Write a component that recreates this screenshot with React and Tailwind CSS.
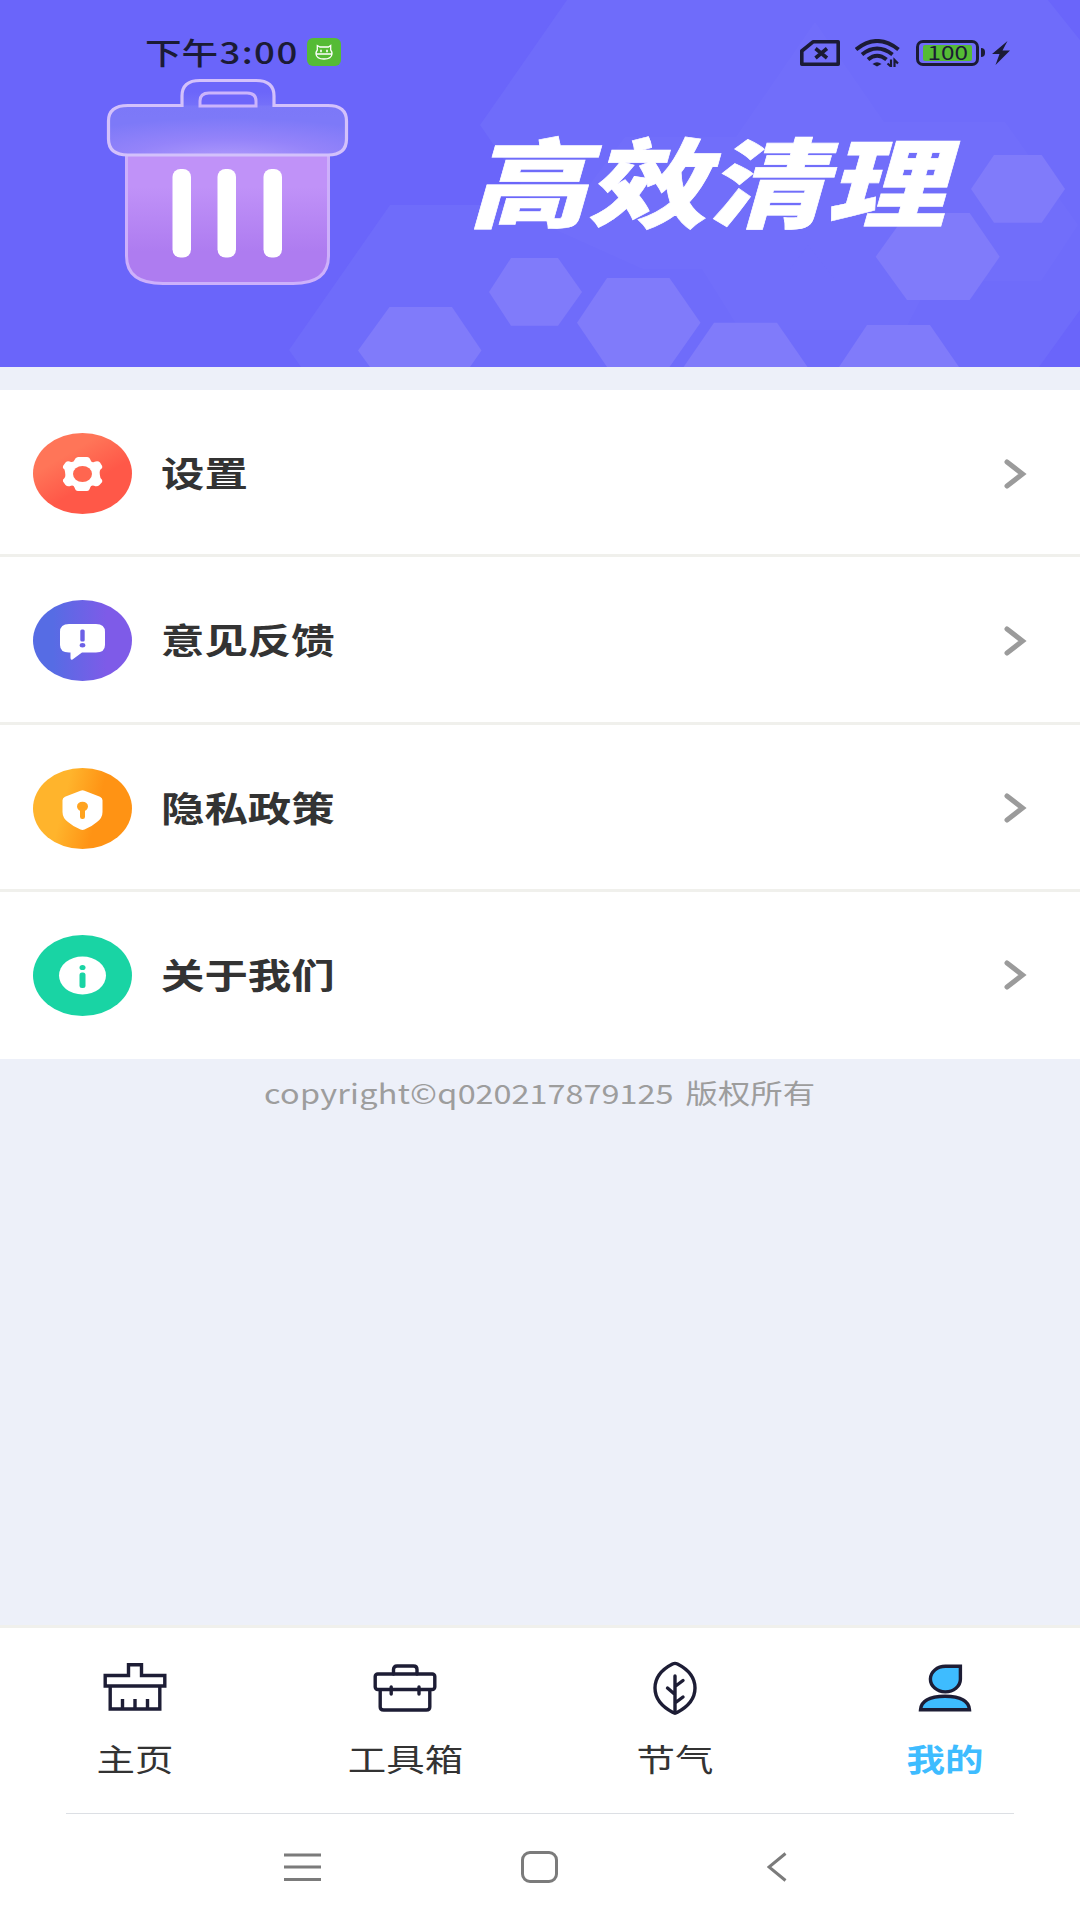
import { useState } from 'react';

const FONT = "font-['Noto_Sans_CJK_SC','Noto_Sans',sans-serif]";

// --- Icons ---
const SettingsIcon = () => (
  <svg width="99" height="81" viewBox="0 0 99 81">
    <defs>
      <linearGradient id="red" x1="0.2" y1="0.1" x2="0.7" y2="0.8">
        <stop offset="0.25" stopColor="#ff7558" />
        <stop offset="0.75" stopColor="#ff5848" />
      </linearGradient>
    </defs>
    <ellipse cx="49.5" cy="40.5" rx="49.5" ry="40.5" fill="url(#red)" />
    <path
      d="M45 24h9q2.500 0 3.500 3t3.500 2q4-1.500 6 .500l2.200 3.500q.800 2-1.700 3.500-1.700 2 0 8.500 2.500 2 1.700 4l-2.700 3q-2.200 2.200-5.500.800-3-.800-3.800 1.700-1 3.500-3.200 3.500h-9q-2.500 0-3.500-3.500-.800-2.500-3.500-1.700-3.500 1.400-5.500-.800l-2.500-3.500q-.900-2 1.500-3.500 1.700-2 0-8.500-2.400-1.500-1.500-3.500l2.500-3.500q2-2 5.500-.500 2.700.500 3.500-2t3.500-3z"
      fill="#fff"
    />
    <ellipse cx="49.500" cy="41" rx="9.500" ry="8" fill="#ff6650" />
  </svg>
);

const FeedbackIcon = () => (
  <svg width="99" height="81" viewBox="0 0 99 81">
    <defs>
      <linearGradient id="violet">
        <stop offset="0.2" stopColor="#566ce4" />
        <stop offset="0.75" stopColor="#7e5be8" />
      </linearGradient>
    </defs>
    <ellipse cx="49.5" cy="40.5" rx="49.5" ry="40.5" fill="url(#violet)" />
    <path d="M36 24h27q9 0 9 8v13q0 7.500-9 7.500H49l-9.500 7q-2 .8-2-1.500v-5.500H36q-9 0-9-7.500V32q0-8 9-8z" fill="#fff" />
    <rect x="47.300" y="29.500" width="4.400" height="12" rx="1.500" fill="#6c60e6" />
    <ellipse cx="49.500" cy="45.300" rx="2.800" ry="2.200" fill="#6c60e6" />
  </svg>
);

const PrivacyIcon = () => (
  <svg width="99" height="81" viewBox="0 0 99 81">
    <defs>
      <linearGradient id="orange" x1="0" y1="0.4" x2="1" y2="0.6">
        <stop offset="0.3" stopColor="#ffb42c" />
        <stop offset="0.65" stopColor="#ff9314" />
      </linearGradient>
    </defs>
    <ellipse cx="49.5" cy="40.5" rx="49.5" ry="40.5" fill="url(#orange)" />
    <path d="M47.500 22.700q2-1 4 0l15.500 6q2.500 1 2.500 3.500V44q0 6-5.500 10-5 4.500-12.500 7.500-2 .8-4 0Q40 58.500 35 54q-5.500-4-5.500-10V32.200q0-2.500 2.500-3.500z" fill="#fff" />
    <ellipse cx="49.500" cy="38.500" rx="5.500" ry="4.800" fill="#ffa31f" />
    <rect x="47" y="39" width="5" height="12" rx="2.200" fill="#ffa31f" />
  </svg>
);

const AboutIcon = () => (
  <svg width="99" height="81" viewBox="0 0 99 81">
    <ellipse cx="49.5" cy="40.5" rx="49.5" ry="40.5" fill="#19d4a4" />
    <ellipse cx="49.500" cy="40.500" rx="23.500" ry="19" fill="#fff" />
    <ellipse cx="49.500" cy="32.500" rx="3" ry="2.600" fill="#19d4a4" />
    <rect x="46.500" y="37.500" width="6" height="15.500" rx="2.500" fill="#19d4a4" />
  </svg>
);

const BrushIcon = () => (
  <svg width="64" height="56" viewBox="0 0 64 56" fill="none" stroke="#1d1d35" strokeWidth="3.4">
    <path d="M25.500 14.500V3.800h13v10.700h23.300v10.500H2.200v-10.500z" />
    <path d="M7.200 25v23h49.600V25M19.500 47.500V38M32 47.500V38M44.500 47.500V38" />
  </svg>
);

const ToolboxIcon = () => (
  <svg width="64" height="56" viewBox="0 0 64 56" fill="none" stroke="#1d1d35" strokeWidth="3.4" strokeLinejoin="round" strokeLinecap="round">
    <path d="M20.500 13V8.500q0-3.500 3.500-3.500h16.500q3.500 0 3.500 3.500V13" />
    <rect x="2.200" y="13" width="59.600" height="15.500" rx="2.500" />
    <path d="M7.200 29v17q0 3 3.500 3h42.600q3.500 0 3.500-3v-17M18.200 26v7M46 26v7" />
  </svg>
);

const LeafIcon = () => (
  <svg width="64" height="56" viewBox="0 0 64 56" fill="none" stroke="#1d1d35" strokeWidth="3.4" strokeLinejoin="round" strokeLinecap="round">
    <path d="M29.500 3q2.500-1.200 5 0Q52 12 52 27T34 51.500q-2 1.500-4 0Q12 42 12 27T29.500 3z" />
    <path d="M32 15V51M32 25.500l8-6M32 33.500l-7.500-6.500M32 42l8-6" />
  </svg>
);

const MineIcon = () => (
  <svg width="64" height="56" viewBox="0 0 64 56" fill="#3ebcff" stroke="#1d1d35" strokeWidth="3.4">
    <path d="M32.500 5.300H47.400V18.200A15 12.800 0 1 1 32.500 5.300z" />
    <path d="M7.500 48.800Q8.500 35.500 32 35.300 55.500 35.500 56.500 48.800z" />
  </svg>
);

const menuItems = [
  { title: '设置', icon: SettingsIcon },
  { title: '意见反馈', icon: FeedbackIcon },
  { title: '隐私政策', icon: PrivacyIcon },
  { title: '关于我们', icon: AboutIcon },
];

const tabs = [
  { key: 'home', label: '主页', icon: BrushIcon },
  { key: 'tools', label: '工具箱', icon: ToolboxIcon },
  { key: 'solar', label: '节气', icon: LeafIcon },
  { key: 'mine', label: '我的', icon: MineIcon },
];

// Hexagons and trash can behind the banner text
function BannerArt() {
  return (
    <svg className="absolute inset-0" width="1080" height="367" viewBox="0 0 1080 367">
      <defs>
        <linearGradient id="bin" x1="0" y1="0" x2="0" y2="1">
          <stop offset="0.25" stopColor="#c092f8" />
          <stop offset="0.75" stopColor="#ae7cf0" />
        </linearGradient>
        <radialGradient id="lid" cx="0.5" cy="1.1" r="0.85">
          <stop offset="0" stopColor="#b9a0fc" />
          <stop offset="0.5" stopColor="#9885fa" />
          <stop offset="1" stopColor="#7d79f8" />
        </radialGradient>
        <linearGradient id="lidFade" x1="0" y1="0" x2="0" y2="1">
          <stop offset="0.15" stopColor="#6c66fa" />
          <stop offset="0.5" stopColor="#7d79f8" />
        </linearGradient>
      </defs>

      <path d="M567 0 480 125 535 205H390L289 350 301 367H1039L1080 310V40L1048 0z" fill="#6f6cfa" />
      <g fill="#fff" fillOpacity="0.018">
        <path d="M815 22 884 122H1005L1078 225 1041 281H836L808 245 790 269H643L556 230 625 137H736z" />
        <path d="M790 269 808 245 836 281H930L905 330H740L702 269z" />
      </g>
      <g fill="#807bfa">
        <path d="M389.500 307H452L481.500 350.600 470 367H370L358 350.600z" />
        <path d="M511 258H558L582 292 558 325.700H511L489 292z" />
        <path d="M607 278H669.500L700.500 322.700 669.500 367H607L577 322.700z" />
        <path d="M714 322.700H777L807.600 367H683.600z" />
        <path d="M867 325H930L959 367H839z" />
        <path d="M907 213H969.700L999.700 256.700 969.700 300H907L875.700 256.700z" />
        <path d="M994 155H1041.700L1065 189 1041.700 222.700H994L971 189z" />
      </g>

      <path d="M126.500 154H328.500V256Q328.500 283.500 293 283.500H163Q126.500 283.500 126.500 256z" fill="url(#bin)" stroke="#cdb0fb" strokeWidth="3" />
      <path
        d="M182 105.500V96Q182 80.500 200 80.500H256Q274 80.500 274 96V105.500H328Q346.500 105.500 346.500 121V139Q346.500 155 328 155H128Q108.500 155 108.500 139V121Q108.500 105.500 128 105.500z"
        fill="url(#lidFade)"
      />
      <rect x="108.500" y="105.500" width="238" height="49.500" rx="18" fill="url(#lid)" fillOpacity="0.85" />
      <path
        d="M182 105.500V96Q182 80.500 200 80.500H256Q274 80.500 274 96V105.500H328Q346.500 105.500 346.500 121V139Q346.500 155 328 155H128Q108.500 155 108.500 139V121Q108.500 105.500 128 105.500z"
        fill="none" stroke="#d3c1fb" strokeWidth="3.200"
      />
      <path d="M200 106V101Q200 93 209 93H247Q256 93 256 101V106z" fill="#6d65fa" stroke="#cbb4fb" strokeWidth="3" />
      <g fill="#fff">
        <rect x="172.500" y="169" width="18.500" height="88.500" rx="8" />
        <rect x="217.500" y="169" width="18.500" height="88.500" rx="8" />
        <rect x="263.500" y="169" width="18.500" height="88.500" rx="8" />
      </g>
    </svg>
  );
}

function StatusBar() {
  return (
    <div className="relative flex h-[104px] items-center pl-[145px] text-[#1b1b35]">
      <div className="w-[162px]">
        <span className="inline-block origin-left scale-x-[1.22] whitespace-nowrap text-[30px] leading-none font-medium">
          下午<span className="ml-px tracking-[1.2px]">3:00</span>
        </span>
      </div>
      <svg width="34" height="28" viewBox="0 0 34 28">
        <rect width="34" height="28" rx="6" fill="#55bb35" />
        <path d="M10.300 12V7.500L13 9h8.500l2.200-1.500V12q1.500 2 1.300 4-.5 5-8 5t-8-5q-.2-2 1.300-4zM9.500 16h15" fill="none" stroke="#fff" strokeWidth="1.300" />
        <path d="M14 11.800v2.500M20 11.800v2.500" stroke="#fff" strokeWidth="1.600" />
      </svg>
      <div className="ml-auto flex items-center pr-[70px] pt-px">
        <svg width="40" height="26" viewBox="0 0 40 26" fill="none" stroke="#1b1b35" strokeWidth="3.6">
          <path d="M13 1.800H38.200V24.200H1.800V11z" strokeLinejoin="round" />
          <path d="M15.500 8.500l11.500 9.500M27 8.500l-11.500 9.500" />
        </svg>
        <svg className="ml-[15px]" width="45" height="28" viewBox="0 0 45 28" fill="none" stroke="#1b1b35" strokeWidth="4">
          <path d="M1 10.500Q22 -6.500 43.500 10.500M7 15.500Q22 3.500 37.500 15.500M13 20.500Q22 13 31.500 20.500" />
          <path d="M17.500 25Q22 21.500 26.500 25L22 27.500z" fill="#1b1b35" stroke="none" />
          <path d="M36 20.500v7l-3.500-3M39.500 28v-7l3.500 3.500" strokeWidth="2.200" />
        </svg>
        <div className="ml-4 flex h-[26px] w-[63px] items-center justify-center rounded-[7px] border-3 border-[#1b1b35]">
          <div className="flex h-4 w-[49px] items-center justify-center rounded-xs bg-[#55bb35]">
            <span className="scale-x-[1.28] pb-0.5 text-[19px] leading-none">100</span>
          </div>
        </div>
        <div className="ml-0.5 h-[9px] w-1 rounded-r-sm bg-[#1b1b35]" />
        <svg className="ml-[7px]" width="18" height="24" viewBox="0 0 18 24">
          <path d="M15.500 0 0 13H7.500L3.500 24 18 9.500H10.500z" fill="#1b1b35" />
        </svg>
      </div>
    </div>
  );
}

function MenuRow({ item }) {
  const Icon = item.icon;
  return (
    <li className="flex items-center border-b-3 border-[#f0f0ec] pt-[3px] pl-[33px] pr-[53px] last:border-b-0 last:pt-0">
      <Icon />
      <span className="ml-[29px] origin-left scale-x-[1.24] pb-1 text-[35px] leading-none font-bold text-[#333]">{item.title}</span>
      <svg className="ml-auto" width="24" height="32" viewBox="0 0 24 32" fill="none" stroke="#9b9b9b" strokeWidth="5" strokeLinecap="round">
        <path d="M4 4 19.500 16 4 28" />
      </svg>
    </li>
  );
}

export default function App() {
  const [activeTab, setActiveTab] = useState('mine');

  return (
    <div className={`flex h-[1920px] w-[1080px] flex-col overflow-hidden bg-[#edf0f9] ${FONT}`}>
      {/* Banner */}
      <header className="relative h-[367px] overflow-hidden bg-[#6a65fa]">
        <BannerArt />
        <StatusBar />
        <h1 className="relative mt-[25px] pl-[480px]">
          <span className="inline-block origin-left scale-x-[1.23] -skew-x-[13deg] whitespace-nowrap text-[97px] leading-none font-black text-white [-webkit-text-stroke:0.6px_white]">高效清理</span>
        </h1>
      </header>

      {/* Menu */}
      <ul className="mt-[23px] grid h-[669px] grid-rows-4 bg-white">
        {menuItems.map((item) => (
          <MenuRow key={item.title} item={item} />
        ))}
      </ul>

      <p className="flex h-[66px] items-center justify-center text-[27px] leading-none text-[#9d9d9d]">
        <span className="scale-x-[1.2] whitespace-nowrap [word-spacing:4px]">
          <span className="tracking-[0.2px]">copyright©q</span>020217879125 版权所有
        </span>
      </p>

      {/* Tab bar */}
      <nav className="mt-auto flex h-[188px] border-t-3 border-[#f0f0ec] bg-white">
        {tabs.map((tab) => {
          const Icon = tab.icon;
          return (
            <button
              key={tab.key}
              className={`flex flex-1 flex-col items-center pt-[33px] ${activeTab === tab.key ? 'font-bold text-[#3ebcff]' : 'text-[#333]'}`}
              onClick={() => setActiveTab(tab.key)}
            >
              <Icon />
              <span className="mt-[25px] scale-x-[1.24] text-[31px] leading-none">{tab.label}</span>
            </button>
          );
        })}
      </nav>

      {/* System navigation */}
      <footer className="h-[107px] bg-white px-[66px]">
        <div className="flex h-full items-center border-t border-[#dcdfe4] pl-[218px] text-[#7b7b7b]">
          <svg width="37" height="30" viewBox="0 0 37 30" stroke="currentColor" strokeWidth="3">
            <path d="M0 3h37M0 15h37M0 27.500h37" />
          </svg>
          <div className="ml-[200px] h-8 w-[37px] rounded-[9px] border-3 border-[#7b7b7b]" />
          <svg className="ml-[209px]" width="20" height="30" viewBox="0 0 20 30" fill="none" stroke="currentColor" strokeWidth="3">
            <path d="M18.500 1.500 2 15 18.500 28.500" />
          </svg>
        </div>
      </footer>
    </div>
  );
}
